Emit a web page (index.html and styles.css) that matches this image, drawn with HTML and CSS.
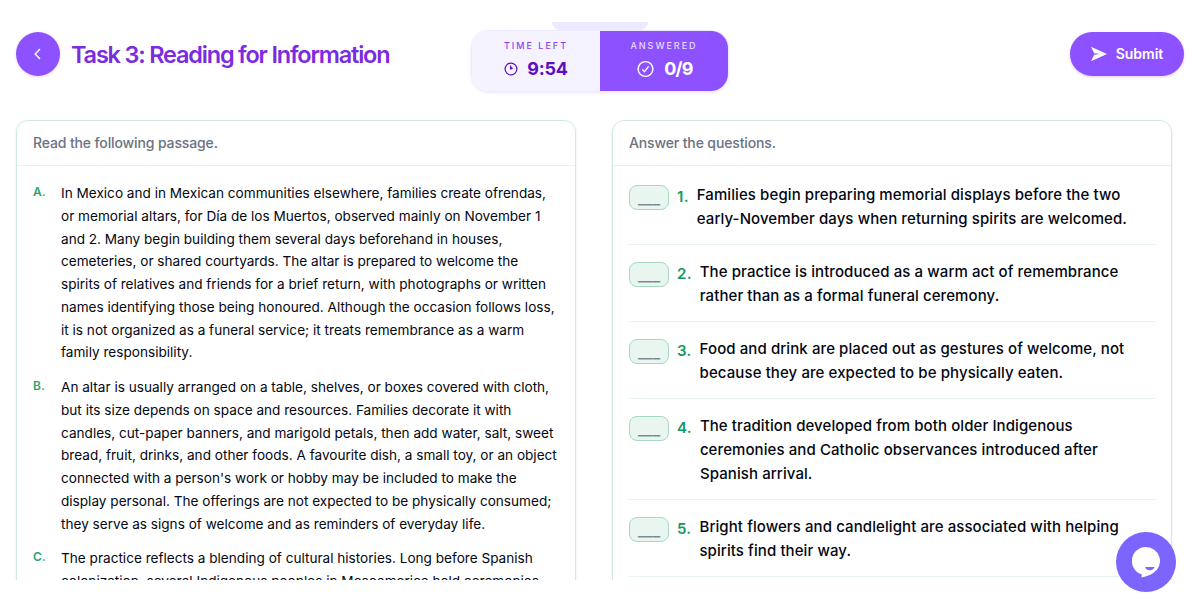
FILE: index.html
```
<!DOCTYPE html>
<html lang="en">
<head>
	<meta charset="utf-8">
	<title>Task 3: Reading for Information</title>
	<link rel="stylesheet" href="styles.css">
</head>
<body>
	<header class="top-bar">
		<div class="top-left">
			<button class="back-button" aria-label="Back">
				<svg width="16" height="16" viewBox="0 0 16 16" fill="none" stroke="currentColor" stroke-width="1.4"><path d="M10 3 5.2 8 10 13"/></svg>
			</button>
			<h1 class="title">Task 3: Reading for Information</h1>
		</div>
		<div class="stats">
			<div class="stats-tab"></div>
			<div class="stat time">
				<div class="stat-label">TIME LEFT</div>
				<div class="stat-value">
					<svg width="14" height="14" viewBox="0 0 14 14" fill="none" stroke="currentColor" stroke-width="1.2"><circle cx="7" cy="7" r="5.9"/><path d="M6.6 3.6V7.4"/><path d="M7 4.8 9.4 6.3 7 7.6z" fill="currentColor" stroke="none"/></svg>
					<span>9:54</span>
				</div>
			</div>
			<div class="stat answered">
				<div class="stat-label">ANSWERED</div>
				<div class="stat-value">
					<svg width="17" height="18" viewBox="0 0 18 18" fill="none" stroke="currentColor" stroke-width="1.5"><circle cx="9" cy="9" r="7.8"/><path d="m5.6 9.4 2.3 2.5 4.4-5.7"/></svg>
					<span>0/9</span>
				</div>
			</div>
		</div>
		<button class="submit-button">
			<svg width="16" height="16" viewBox="0 0 16 16" fill="currentColor"><path d="M0 .7 16 8 0 15.3 3.2 8.8 9.5 8 3.2 7.2z"/></svg>
			<span>Submit</span>
		</button>
	</header>

	<main class="columns">
		<section class="panel">
			<div class="panel-head">Read the following passage.</div>
			<div class="passage">
				<div class="paragraph">
					<span class="letter">A.</span>
					<p>In Mexico and in Mexican communities elsewhere, families create ofrendas,<br>
					or memorial altars, for Día de los Muertos, observed mainly on November 1<br>
					and 2. Many begin building them several days beforehand in houses,<br>
					cemeteries, or shared courtyards. The altar is prepared to welcome the<br>
					spirits of relatives and friends for a brief return, with photographs or written<br>
					names identifying those being honoured. Although the occasion follows loss,<br>
					it is not organized as a funeral service; it treats remembrance as a warm<br>
					family responsibility.</p>
				</div>
				<div class="paragraph">
					<span class="letter">B.</span>
					<p>An altar is usually arranged on a table, shelves, or boxes covered with cloth,<br>
					but its size depends on space and resources. Families decorate it with<br>
					candles, cut-paper banners, and marigold petals, then add water, salt, sweet<br>
					bread, fruit, drinks, and other foods. A favourite dish, a small toy, or an object<br>
					connected with a person's work or hobby may be included to make the<br>
					display personal. The offerings are not expected to be physically consumed;<br>
					they serve as signs of welcome and as reminders of everyday life.</p>
				</div>
				<div class="paragraph">
					<span class="letter">C.</span>
					<p>The practice reflects a blending of cultural histories. Long before Spanish<br>
					colonization, several Indigenous peoples in Mesoamerica held ceremonies</p>
				</div>
			</div>
		</section>

		<section class="panel">
			<div class="panel-head">Answer the questions.</div>
			<div class="questions">
				<div class="question">
					<button class="blank">___</button>
					<span class="number">1.</span>
					<p>Families begin preparing memorial displays before the two<br>early-November days when returning spirits are welcomed.</p>
				</div>
				<div class="question">
					<button class="blank">___</button>
					<span class="number">2.</span>
					<p>The practice is introduced as a warm act of remembrance<br>rather than as a formal funeral ceremony.</p>
				</div>
				<div class="question">
					<button class="blank">___</button>
					<span class="number">3.</span>
					<p>Food and drink are placed out as gestures of welcome, not<br>because they are expected to be physically eaten.</p>
				</div>
				<div class="question">
					<button class="blank">___</button>
					<span class="number">4.</span>
					<p>The tradition developed from both older Indigenous<br>ceremonies and Catholic observances introduced after<br>Spanish arrival.</p>
				</div>
				<div class="question">
					<button class="blank">___</button>
					<span class="number">5.</span>
					<p>Bright flowers and candlelight are associated with helping<br>spirits find their way.</p>
				</div>
			</div>
		</section>
	</main>

	<button class="chat-button" aria-label="Chat">
		<svg width="28" height="31" viewBox="0 0 28 31"><path fill="#fff" d="M14 0a14 14 0 0 1 7.5 25.8C18 28.2 13.5 29.7 9.5 30.5L9.8 27.4A14 14 0 0 1 14 0z"/><path fill="#7c65ff" d="M13 20h9.5c-.8 2.1-2.5 3.3-4.7 3.3S13.8 22.1 13 20z"/></svg>
	</button>
</body>
</html>
```
FILE: styles.css
```
*{
	box-sizing: border-box;
}
body{
	margin: 0;
	height: 612px;
	overflow: hidden;
	background-color: #fff;
	color: #030712;
	font-family: Inter, "Liberation Sans", sans-serif;
	font-size: 14px;
}
h1, p{
	margin: 0;
}
button{
	font-family: inherit;
	border: none;
	padding: 0;
}
svg{
	display: block;
}

.top-bar{
	display: grid;
	grid-template-columns: 1fr 258px 1fr;
	align-items: center;
	height: 120px;
	padding: 0 16px 12px;
}
.top-left{
	display: flex;
	align-items: center;
	gap: 11px;
}
.back-button{
	display: flex;
	align-items: center;
	justify-content: center;
	width: 44px;
	height: 44px;
	border-radius: 50%;
	background-color: #8e51ff;
	color: #fff;
	box-shadow: 0 1px 3px rgba(142,81,255,0.25);
}
.title{
	font-size: 23.5px;
	line-height: 32px;
	font-weight: 600;
	letter-spacing: -1.2px;
	color: #7b2be0;
	white-space: nowrap;
	padding-top: 2px;
}

.stats{
	position: relative;
	display: grid;
	grid-template-columns: 1fr 1fr;
	height: 62px;
	margin-top: 14px;
	border: 1px solid #ede9fe;
	border-radius: 18px;
	box-shadow: 0 1px 3px rgba(142,81,255,0.15);
}
.stats-tab{
	position: absolute;
	left: 80px;
	top: -9px;
	width: 96px;
	height: 8px;
	border-radius: 0 0 8px 8px;
	background-color: #ede9fe;
}
.stat{
	display: flex;
	flex-direction: column;
	align-items: center;
	padding-top: 8px;
}
.time{
	background-color: #f5f3ff;
	border-radius: 17px 0 0 17px;
	color: #5d0ec0;
}
.answered{
	background-color: #8e51ff;
	border-radius: 0 17px 17px 0;
	color: #fff;
}
.stat-label{
	font-size: 9px;
	line-height: 14px;
	font-weight: 500;
	letter-spacing: 2px;
}
.time .stat-label{
	color: #8e3ff0;
}
.answered .stat-label{
	color: #e6dcff;
}
.stat-value{
	display: flex;
	align-items: center;
	gap: 9px;
	margin-top: 2px;
	font-size: 18px;
	line-height: 28px;
	font-weight: 700;
	letter-spacing: -0.2px;
}
.answered .stat-value{
	gap: 10px;
	padding-left: 2px;
	letter-spacing: -0.7px;
}

.submit-button{
	display: flex;
	align-items: center;
	justify-content: center;
	justify-self: end;
	gap: 9px;
	width: 114px;
	height: 44px;
	border-radius: 22px;
	background-color: #8e51ff;
	color: #fff;
	font-size: 14px;
	font-weight: 600;
	box-shadow: 0 1px 3px rgba(142,81,255,0.3);
}
.submit-button span{
	margin-top: -1px;
}

.columns{
	display: grid;
	grid-template-columns: 560px 560px;
	gap: 36px;
	height: 460px;
	padding: 0 16px;
	overflow: hidden;
}
.panel{
	height: 700px;
	border: 1px solid #d0ebdf;
	border-radius: 12px;
	box-shadow: 0 1px 3px rgba(0,0,0,0.08);
}
.panel-head{
	height: 45px;
	padding: 0 16px;
	border-bottom: 1px solid #e5f3ed;
	color: #6a7282;
	font-size: 14px;
	font-weight: 500;
	letter-spacing: -0.13px;
	line-height: 44px;
}
.passage{
	padding: 16px;
}
.paragraph{
	display: flex;
	margin-bottom: 12px;
	line-height: 22.75px;
}
.paragraph p{
	font-size: 13.6px;
	white-space: nowrap;
}
.letter{
	width: 28px;
	flex-shrink: 0;
	color: #2ba56c;
	font-size: 12px;
	font-weight: 600;
	line-height: 20px;
}

.questions{
	padding: 2px 15px 0 16px;
}
.question{
	display: flex;
	align-items: flex-start;
	gap: 8px;
	padding: 15px 0 13px;
	border-bottom: 1px solid #e8f4ef;
}
.question p{
	font-size: 15px;
	line-height: 24px;
	font-weight: 500;
	letter-spacing: 0.09px;
	white-space: nowrap;
}
.number{
	color: #109966;
	font-size: 15px;
	font-weight: 600;
	line-height: 24px;
	letter-spacing: 0.3px;
	padding-top: 2px;
}
.blank{
	width: 40px;
	height: 25px;
	margin-top: 2px;
	border: 1px solid #a5d9c0;
	border-radius: 8px;
	background-color: #e8f6ef;
	color: #7c8795;
	font-size: 16px;
	font-weight: 500;
	line-height: 20px;
}

.chat-button{
	position: fixed;
	right: 24px;
	bottom: 20px;
	display: flex;
	align-items: center;
	justify-content: center;
	width: 60px;
	height: 60px;
	border-radius: 50%;
	background-color: #7c65ff;
}
```
